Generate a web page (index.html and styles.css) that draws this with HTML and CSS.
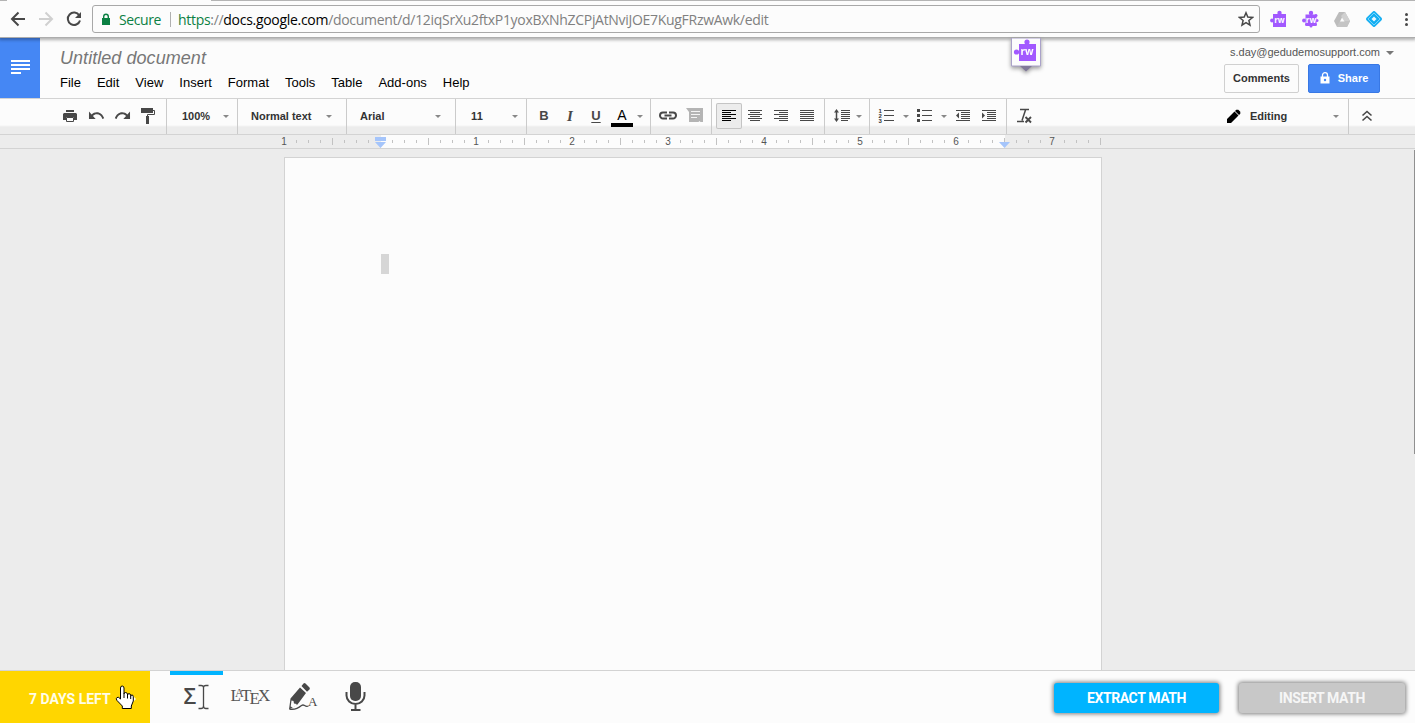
FILE: index.html
```
<!DOCTYPE html>
<html lang="en">
<head>
    <meta charset="UTF-8">
    <title>Untitled document</title>
    <link rel="stylesheet" href="styles.css">
</head>
<body>
    <div class="browser-bar">
        <svg class="nav-icons" width="92" height="37" viewBox="0 0 92 37">
            <path d="M25 19H12M18.500 12.500L12 19l6.500 6.500" fill="none" stroke="#484848" stroke-width="2"/>
            <path d="M39 19h13M45.500 12.500L52 19l-6.500 6.500" fill="none" stroke="#d0d0d0" stroke-width="2"/>
            <path d="M79.300 15.500A6.200 6.200 0 1 0 80 20.500" fill="none" stroke="#484848" stroke-width="2"/>
            <path d="M81 12v6h-6z" fill="#484848"/>
        </svg>
        <div class="omnibox">
            <svg width="10" height="13" viewBox="0 0 10 13"><path d="M1 5h8v7H1z" fill="#0b8043"/><path d="M2.700 5.500V3.500a2.300 2.300 0 0 1 4.600 0v2" fill="none" stroke="#0b8043" stroke-width="1.400"/></svg>
            <span class="secure">Secure</span>
            <span class="url"><span class="scheme">https</span>://<b>docs.google.com</b>/document/d/12iqSrXu2ftxP1yoxBXNhZCPjAtNviJOE7KugFRzwAwk/edit</span>
            <svg class="star" width="16" height="16" viewBox="0 0 16 16"><path d="M8 1.800l1.800 4.300 4.700.4-3.600 3 1.100 4.600L8 11.700l-4 2.400 1.100-4.600-3.600-3 4.700-.4z" fill="none" stroke="#484848" stroke-width="1.500"/></svg>
        </div>
        <svg class="extensions" width="155" height="37" viewBox="1260 0 155 37">
            <g fill="#a259ff">
                <path d="M1273 14h13v13h-13z"/><circle cx="1279.500" cy="13" r="2.200"/><circle cx="1272" cy="20.500" r="1.900"/>
                <path d="M1305.500 14.500h11v10.500l-2 1h-7l-2-1z"/><circle cx="1311" cy="13" r="2.200"/><circle cx="1304" cy="20.500" r="1.900"/>
                <circle cx="1316" cy="15.500" r="1.500"/><circle cx="1317" cy="20.500" r="1.500"/><circle cx="1315.500" cy="24.500" r="1.500"/><circle cx="1311" cy="26" r="1.500"/><circle cx="1306.500" cy="24.500" r="1.500"/>
            </g>
            <g class="rw-label"><text x="1274.200" y="23">rw</text><text x="1305.800" y="23">rw</text></g>
            <path d="M1339 12h6l5 9-3 6h-10l-3-6z" fill="#bcbcbc"/>
            <path d="M1345 12l5 9h-6l-3-5z" fill="#d0d0d0"/><path d="M1337 26l3-5h10l-3 6h-10z" fill="#c4c4c4"/><path d="M1342 17.500l2.500 4h-4.500z" fill="#fcfcfc"/>
            <g transform="translate(1374 19) rotate(45)">
                <rect x="-5.700" y="-5.700" width="11.400" height="11.400" rx="1.500" fill="#12aef2" stroke="#12aef2"/>
                <rect x="-4.300" y="-4.300" width="8.600" height="8.600" fill="none" stroke="#a5e3ff" stroke-width=".7"/>
                <rect x="-1.800" y="-1.800" width="3.600" height="3.600" fill="#e8f8ff"/>
            </g>
            <g fill="#484848"><circle cx="1406.500" cy="14.500" r="1.500"/><circle cx="1406.500" cy="19.500" r="1.500"/><circle cx="1406.500" cy="24.500" r="1.500"/></g>
        </svg>
    </div>

    <div class="doc-header">
        <div class="logo">
            <svg width="19" height="14" viewBox="0 0 19 14"><path d="M0 0h19v2H0zM0 4h19v2H0zM0 8h19v2H0zM0 12h10v2H0z" fill="#fff"/></svg>
        </div>
        <div class="title-area">
            <div class="doc-title">Untitled document</div>
            <div class="menu">
                <span>File</span><span>Edit</span><span>View</span><span>Insert</span><span>Format</span><span>Tools</span><span>Table</span><span>Add-ons</span><span>Help</span>
            </div>
        </div>
        <div class="account">
            <div class="email">s.day@gedudemosupport.com</div>
            <div class="account-buttons">
                <div class="btn">Comments</div>
                <div class="btn btn-share">
                    <svg width="10" height="12" viewBox="0 0 10 12"><path d="M.5 4.500h9V11.500h-9z" fill="#fff"/><path d="M2.500 5V3a2.500 2.300 0 0 1 5 0v2" fill="none" stroke="#fff" stroke-width="1.300"/><circle cx="5" cy="8" r="1.200" fill="#4587f4"/></svg>
                    Share
                </div>
            </div>
        </div>
    </div>

    <div class="toolbar">
        <div class="group group-file">
            <svg class="icon" viewBox="0 0 26 26"><path d="M9 7h8v2H9zM7 10h12l1 1v6h-3v-3H9v3H6v-6z" fill="#484848"/><path d="M9.500 14.500h7v4h-7z" fill="#fcfcfc" stroke="#484848"/></svg>
            <svg class="icon" viewBox="0 0 26 26"><path transform="translate(4.500 2.500) scale(.74 .84)" d="M12.500 8c-2.650 0-5.050.99-6.900 2.600L2 7v9h9l-3.620-3.620c1.390-1.160 3.160-1.880 5.120-1.880 3.540 0 6.550 2.310 7.600 5.500l2.370-.78C21.080 11.030 17.150 8 12.500 8z" fill="#484848"/></svg>
            <svg class="icon" viewBox="0 0 26 26"><path transform="translate(22.500 2.500) scale(-.74 .84)" d="M12.500 8c-2.650 0-5.050.99-6.900 2.600L2 7v9h9l-3.620-3.620c1.390-1.160 3.160-1.880 5.120-1.880 3.540 0 6.550 2.310 7.600 5.500l2.370-.78C21.080 11.030 17.150 8 12.500 8z" fill="#484848"/></svg>
            <svg class="icon" viewBox="0 0 26 26"><path d="M6 5h12v5H6zM11 13h3v8h-3z" fill="#484848"/><path d="M18 7.500h1.500v4h-7v2" fill="none" stroke="#484848"/></svg>
        </div>
        <div class="group select zoom"><span>100%</span><i class="arrow"></i></div>
        <div class="group select style"><span>Normal text</span><i class="arrow"></i></div>
        <div class="group select font"><span>Arial</span><i class="arrow"></i></div>
        <div class="group select size"><span>11</span><i class="arrow"></i></div>
        <div class="group group-text">
            <span class="cell bold">B</span>
            <span class="cell italic">I</span>
            <span class="cell underline">U</span>
            <span class="cell color">A</span>
            <i class="arrow"></i>
        </div>
        <div class="group group-insert">
            <svg class="icon" viewBox="0 0 26 26"><path d="M12 9.500H8a3 3 0 0 0 0 6h4M14 9.500h4a3 3 0 0 1 0 6h-4M9.500 12.500h7" fill="none" stroke="#484848" stroke-width="2"/></svg>
            <svg class="icon" viewBox="0 0 26 26"><path d="M4 5h17v14h-2.500l-1-1-1 1H7V9z" fill="#b4b4b4"/><path d="M9 8.500h9M9 11.500h9M9 14.500h6" stroke="#f4f4f4"/></svg>
        </div>
        <div class="group group-align">
            <svg class="icon active" viewBox="0 0 26 26"><path d="M6 7.500h14M6 9.500h9M6 11.500h14M6 13.500h9M6 15.500h14M6 17.500h9" stroke="#000"/></svg>
            <svg class="icon" viewBox="0 0 26 26"><path d="M6 7.500h14M8 9.500h10M6 11.500h14M8 13.500h10M6 15.500h14M8 17.500h10" stroke="#484848"/></svg>
            <svg class="icon" viewBox="0 0 26 26"><path d="M6 7.500h14M11 9.500h9M6 11.500h14M11 13.500h9M6 15.500h14M11 17.500h9" stroke="#484848"/></svg>
            <svg class="icon" viewBox="0 0 26 26"><path d="M6 7.500h14M6 9.500h14M6 11.500h14M6 13.500h14M6 15.500h14M6 17.500h14" stroke="#484848"/></svg>
        </div>
        <div class="group group-spacing">
            <svg class="icon" viewBox="0 0 26 26"><path d="M12 7.500h9M12 9.500h9M12 11.500h9M12 13.500h9M12 15.500h9M12 17.500h7" stroke="#484848"/><path d="M7.500 6L10 9.500H8.250v6H10L7.500 19 5 15.500h1.750v-6H5z" fill="#484848"/></svg>
            <i class="arrow"></i>
        </div>
        <div class="group group-list">
            <svg class="icon" viewBox="0 0 26 26"><path d="M11 7.500h10M11 12.500h10M11 17.500h10" stroke="#484848"/><g class="list-numbers"><text x="5.500" y="9.500">1</text><text x="5.500" y="14.500">2</text><text x="5.500" y="19.500">3</text></g></svg>
            <i class="arrow"></i>
            <svg class="icon" viewBox="0 0 26 26"><path d="M10 7.500h10M10 12.500h10M10 17.500h10" stroke="#484848"/><path d="M5 6h3v3H5zM5 11h3v3H5zM5 16h3v3H5z" fill="#484848"/></svg>
            <i class="arrow"></i>
            <svg class="icon" viewBox="0 0 26 26"><path d="M6 7.500h14M11 9.500h9M11 11.500h9M11 13.500h9M11 15.500h9M6 17.500h14" stroke="#484848"/><path d="M9 9.500v6L6 12.500z" fill="#484848"/></svg>
            <svg class="icon" viewBox="0 0 26 26"><path d="M6 7.500h14M11 9.500h9M11 11.500h9M11 13.500h9M11 15.500h9M6 17.500h14" stroke="#484848"/><path d="M6 9.500v6l3-3z" fill="#484848"/></svg>
        </div>
        <div class="group group-clear">
            <svg class="icon" viewBox="0 0 26 26"><path d="M8 6.500h9M5 18.500h7M13.500 7l-3.500 10.500" fill="none" stroke="#484848" stroke-width="1.500"/><path d="M13.500 14l5.500 5.500M19 14l-5.500 5.500" stroke="#484848" stroke-width="1.900"/></svg>
        </div>
        <div class="mode">
            <svg width="15" height="15" viewBox="0 0 15 15"><path d="M1 14v-4l7.500-7.500 4 4L5 14zM9 2l1.300-1.300h2l2 2v2L13 6z" fill="#000"/></svg>
            <span>Editing</span>
            <i class="arrow"></i>
        </div>
        <div class="collapse">
            <svg width="12" height="12" viewBox="0 0 12 12"><path d="M1.500 5.500L6 1.500l4.500 4M1.500 10.500L6 6.500l4.500 4" fill="none" stroke="#484848" stroke-width="1.600"/></svg>
        </div>
    </div>

    <div class="ruler">
        <svg width="1415" height="13" viewBox="0 135 1415 13">
            <defs>
                <pattern id="ticks" x="284" y="135" width="96" height="13" patternUnits="userSpaceOnUse">
                    <path d="M12 5h1v3h-1zM24 5h1v3h-1zM36 5h1v3h-1zM48 3h1v7h-1zM60 5h1v3h-1zM72 5h1v3h-1zM84 5h1v3h-1z" fill="#c2c2c2"/>
                </pattern>
            </defs>
            <path d="M381 135h624v13H381z" fill="#fcfcfc"/>
            <path d="M285 135h816v13H285z" fill="url(#ticks)"/>
            <g class="ruler-numbers">
                <text x="284" y="145">1</text><text x="476" y="145">1</text><text x="572" y="145">2</text><text x="668" y="145">3</text><text x="764" y="145">4</text><text x="860" y="145">5</text><text x="956" y="145">6</text><text x="1052" y="145">7</text>
            </g>
            <path d="M375 137h11v4h-11zM375 142h11l-5.500 6zM999 142h11l-5.500 6z" fill="#a5c5fb"/>
        </svg>
    </div>

    <div class="workspace">
        <div class="page"><div class="caret"></div></div>
        <div class="scrollbar"></div>
    </div>

    <div class="math-bar">
        <div class="trial">
            7 DAYS LEFT
            <svg width="6" height="8" viewBox="0 0 6 8"><path d="M2 0l4 4-4 4z" fill="#fffde8"/></svg>
        </div>
        <div class="math-tools">
            <div class="tool selected">
                <svg width="53" height="52" viewBox="170 671 53 52">
                    <text class="sigma" x="183.500" y="703.500">Σ</text>
                    <path d="M198.500 685.500h2.500q2.500 0 2.500 2v18.500q0 2.500-2.500 2.500h-2.500M208.500 685.500H206q-2.500 0-2.500 2v18.500q0 2.500 2.500 2.500h2.500" fill="none" stroke="#484848" stroke-width="1.300"/>
                </svg>
            </div>
            <div class="tool">
                <svg width="53" height="52" viewBox="223 671 53 52">
                    <g class="latex"><text x="230.500" y="701">L</text><text class="small-a" x="235" y="697">A</text><text x="241" y="701">T</text><text x="249.500" y="704">E</text><text x="258" y="701">X</text></g>
                </svg>
            </div>
            <div class="tool">
                <svg width="53" height="52" viewBox="276 671 53 52">
                    <path d="M301.500 686l2-2.500q1-.8 2 0l4 4q.8 1 0 2l-2.500 2.300zM300 687.500l6 5.500L297.500 704.500l-8.500 5 1.500-11z" fill="#484848"/>
                    <path d="M291.500 700.500l2 .5.500 2.500 2.500.500.200 1.500-4 2-2-1z" fill="#fcfcfc"/>
                    <path d="M289.500 709c5 1 9-1 12-3.500 3-2 3 2 7 .5" fill="none" stroke="#484848" stroke-width="1.300"/>
                    <text class="pen-a" x="308" y="705.500">A</text>
                </svg>
            </div>
            <div class="tool">
                <svg width="53" height="52" viewBox="329 671 53 52">
                    <rect x="350" y="682" width="11" height="19" rx="5" fill="#484848"/>
                    <path d="M346.500 692v3.500a9 8.500 0 0 0 18 0V692M355.500 704v6M351 710h9.500" fill="none" stroke="#484848" stroke-width="2"/>
                </svg>
            </div>
        </div>
        <div class="math-actions">
            <div class="action">EXTRACT MATH</div>
            <div class="action disabled">INSERT MATH</div>
        </div>
    </div>

    <svg class="rw-tab" width="40" height="40" viewBox="1006 38 40 40">
        <path d="M1011.500 38h29v28h-29z" fill="#fcfcfc" stroke="#aaa2c9"/>
        <path d="M1020 66h12l-6 5.500z" fill="#817999"/>
        <g fill="#a259ff"><path d="M1019 44h17v17h-17z"/><circle cx="1027" cy="42" r="2.600"/><circle cx="1016.500" cy="52" r="2.600"/><path d="M1017 51h3v2h-3z"/></g>
        <text x="1020.500" y="55">rw</text>
    </svg>
    <svg class="pointer" width="20" height="25" viewBox="0 0 20 25">
        <path d="M5.500 14V3q0-2 1.700-2t1.800 2v6q0-1.500 1.500-1.500T12.500 9v1q0-1.300 1.500-1.300t1.700 1.500v1q0-1.200 1.300-1.200t1.300 1.700V16l-2 5v2.500h-9V21L2 15.500q-1.500-2 0-3t3.500 1.500z" fill="#fff" stroke="#000"/>
        <path d="M9 9v4M12.500 10v3.500M15.700 11v3" stroke="#000"/>
    </svg>
</body>
</html>
```

FILE: styles.css
```
body {
    margin: 0;
    height: 723px;
    display: flex;
    flex-direction: column;
    overflow: hidden;
    background: #ececec;
    font-family: Arial, "Liberation Sans", sans-serif;
    color: #000;
}
svg {
    display: block;
    flex: none;
}
.browser-bar {
    position: relative;
    z-index: 1;
    display: flex;
    flex: none;
    height: 37px;
    background: linear-gradient(90deg, #b4b4b4 7px, #fcfcfc 7px, #fcfcfc 211px, #b4b4b4 211px) top / 100% 1px no-repeat #fcfcfc;
    border-bottom: 1px solid #adadad;
    box-shadow: 0 1px 3px 1px rgba(0, 0, 0, 0.3);
}
.omnibox {
    box-sizing: border-box;
    display: flex;
    align-items: center;
    width: 1168px;
    height: 28px;
    margin-top: 5px;
    padding: 0 5px 0 8px;
    border: 1px solid #a8a8a8;
    border-radius: 3px;
    font-family: "Segoe UI", "Open Sans", sans-serif;
    font-size: 14px;
}
.secure {
    margin-left: 8px;
    padding-right: 9px;
    border-right: 1px solid #b0b0b0;
    line-height: 15px;
    width: 42px;
    color: #0b8043;
    letter-spacing: -0.4px;
}
.url {
    margin-left: 7px;
    color: #808080;
    white-space: nowrap;
    letter-spacing: -0.3px;
}
.url .scheme {
    color: #0b8043;
}
.url b {
    font-weight: normal;
    color: #000;
}
.star {
    margin-left: auto;
}
.rw-label {
    font: bold 8px "Open Sans", sans-serif;
    fill: #fff;
}

.doc-header {
    display: flex;
    flex: none;
    height: 60px;
    background: #fcfcfc;
}
.logo {
    width: 40px;
    background: #4587f4;
}
.logo svg {
    margin: 22px 0 0 11px;
}
.title-area {
    padding: 10px 0 0 20px;
}
.doc-title {
    font-size: 18px;
    line-height: 21px;
    font-style: italic;
    color: #777;
    letter-spacing: 0.05px;
}
.menu {
    display: flex;
    gap: 16px;
    margin-top: 5px;
    font-size: 13px;
    line-height: 17px;
}
.account {
    margin-left: auto;
    padding: 7px 35px 0 0;
}
.email {
    display: flex;
    align-items: center;
    height: 13px;
    margin-left: 6px;
    font-size: 11px;
    color: #555;
    width: 150px;
}
.email::after {
    content: "";
    flex: none;
    margin: 2px 0 0 6px;
    border: 4px solid transparent;
    border-top-color: #777;
    border-bottom: 0;
}
.account-buttons {
    display: flex;
    gap: 9px;
    margin-top: 6px;
}
.btn {
    box-sizing: border-box;
    display: flex;
    align-items: center;
    justify-content: center;
    width: 75px;
    height: 29px;
    padding-bottom: 2px;
    border: 1px solid #d0d0d0;
    border-radius: 2px;
    font-size: 11px;
    font-weight: bold;
    color: #333;
}
.btn-share {
    width: 72px;
    gap: 8px;
    background: #4587f4;
    border-color: #3878e5;
    color: #fff;
}

.toolbar {
    box-sizing: border-box;
    display: flex;
    flex: none;
    height: 36px;
    border-top: 1px solid #d3d3d3;
    background: linear-gradient(#fcfcfc 26px, #ececec 28px);
    font-size: 11px;
    font-weight: bold;
    color: #333;
}
.group {
    box-sizing: border-box;
    display: flex;
    align-items: flex-start;
    padding-top: 4px;
    border-right: 1px solid #cbcbcb;
}
.icon {
    width: 26px;
    height: 26px;
}
.arrow {
    flex: none;
    margin-top: 12px;
    border: 3px solid transparent;
    border-top-color: #888;
    border-bottom: 0;
}
.group-file {
    width: 167px;
    padding-left: 57px;
}
.select {
    justify-content: space-between;
    padding-right: 8px;
    line-height: 26px;
}
.zoom {
    width: 71px;
    padding-left: 15px;
}
.style {
    width: 109px;
    padding-left: 13px;
    padding-right: 14px;
}
.font {
    width: 109px;
    padding-left: 13px;
    padding-right: 14px;
}
.size {
    width: 71px;
    padding-left: 15px;
}
.size span {
    letter-spacing: 0.3px;
}
.group-text {
    width: 124px;
    padding-left: 4px;
}
.cell {
    width: 26px;
    line-height: 26px;
    text-align: center;
    font-size: 13px;
    color: #484848;
}
.italic {
    font-family: "Liberation Serif", serif;
    font-style: italic;
    font-size: 15px;
}
.underline {
    text-decoration: underline;
    text-underline-offset: 2px;
}
.color {
    box-sizing: border-box;
    width: 22px;
    height: 24px;
    margin: 0 4px 0 2px;
    border-bottom: 4px solid #000;
    font-size: 14px;
    font-weight: normal;
    line-height: 24px;
    color: #000;
}
.group-insert {
    width: 61px;
    padding-left: 4px;
    gap: 1px;
}
.group-align {
    width: 113px;
    padding-left: 4px;
}
.active {
    background: #ececec;
    border-radius: 2px;
    box-shadow: inset 0 0 0 1px #c4c4c4;
}
.group-spacing {
    width: 45px;
    padding-left: 4px;
}
.group-spacing .arrow {
    margin-left: 1px;
}
.group-list {
    width: 137px;
    padding-left: 3px;
}
.group-list .arrow {
    margin-left: 4px;
    margin-right: 3px;
}
.group-list .arrow ~ .arrow {
    margin-left: 3px;
}
.list-numbers {
    font: bold 6px "Liberation Sans", sans-serif;
    fill: #333;
}
.group-clear {
    padding-left: 5px;
    border: 0;
}
.mode {
    display: flex;
    align-items: center;
    box-sizing: border-box;
    height: 34px;
    width: 122px;
    margin-left: auto;
    padding-right: 9px;
}
.mode span {
    margin-left: 9px;
}
.mode .arrow {
    margin: 1px 0 0 auto;
}
.collapse {
    box-sizing: border-box;
    width: 67px;
    padding: 11px 0 0 12px;
    border-left: 1px solid #cbcbcb;
}

.ruler {
    flex: none;
    height: 13px;
    border-top: 1px solid #d3d3d3;
    border-bottom: 1px solid #d3d3d3;
}
.ruler-numbers {
    font: 10px "Liberation Sans", sans-serif;
    text-anchor: middle;
    fill: #555;
}

.workspace {
    display: flex;
    flex: 1;
    padding-top: 8px;
    position: relative;
}
.page {
    box-sizing: border-box;
    width: 818px;
    margin-left: 284px;
    padding: 96px;
    background: #fcfcfc;
    border: 1px solid #d3d3d3;
    border-bottom: 0;
}
.caret {
    width: 8px;
    height: 20px;
    background: #d6d6d6;
}
.scrollbar {
    position: absolute;
    top: 1px;
    right: 0;
    width: 1px;
    height: 304px;
    background: #909090;
}

.math-bar {
    display: flex;
    flex: none;
    height: 52px;
    border-top: 1px solid #d3d3d3;
    background: #fcfcfc;
    font-family: Roboto, sans-serif;
    font-size: 14px;
    font-weight: bold;
}
.trial {
    box-sizing: border-box;
    display: flex;
    align-items: center;
    justify-content: space-between;
    width: 150px;
    padding: 3px 14px 0 29px;
    background: #ffd600;
    color: #fffde8;
}
.math-tools {
    display: flex;
    margin-left: 20px;
}
.selected {
    background: linear-gradient(#00b4ff, #00b4ff) top / 100% 4px no-repeat;
}
.sigma {
    font: 600 22px "Open Sans", sans-serif;
    fill: #484848;
}
.latex {
    font: 17px "Liberation Serif", serif;
    fill: #555;
}
.latex .small-a {
    font-size: 12px;
}
.pen-a {
    font: 13px "Liberation Serif", serif;
    fill: #484848;
}
.math-actions {
    display: flex;
    gap: 20px;
    margin: 12px 10px 0 auto;
}
.action {
    width: 165px;
    height: 30px;
    border-radius: 3px;
    background: #00b4ff;
    box-shadow: 0 0 4px 1px rgba(0, 0, 0, 0.5);
    line-height: 31px;
    text-align: center;
    letter-spacing: -0.4px;
    color: #fff;
}
.disabled {
    width: 166px;
    background: #c8c8c8;
    color: #f6f6f6;
}

.rw-tab {
    position: absolute;
    z-index: 2;
    left: 1006px;
    top: 38px;
    filter: drop-shadow(0 2px 2px rgba(0, 0, 0, 0.4));
}
.rw-tab text {
    font: bold 10px "Open Sans", sans-serif;
    fill: #fff;
}
.pointer {
    position: absolute;
    left: 115px;
    top: 685px;
}
```
